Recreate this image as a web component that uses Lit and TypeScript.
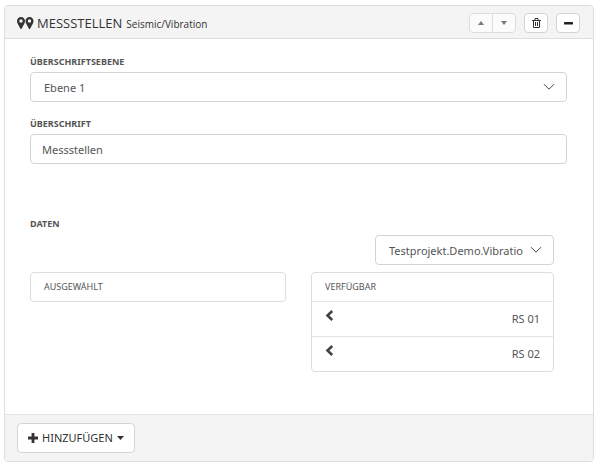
import { LitElement, html, css, svg } from "lit";
import { customElement, property } from "lit/decorators.js";

const pin = svg`<path fill-rule="evenodd" d="M4 0C1.700 0 0 1.800 0 4c0 1 .3 1.700.6 2.400L3.300 11.500Q4 12.500 4.700 11.500L7.400 6.400C7.700 5.700 8 5 8 4 8 1.800 6.300 0 4 0ZM4 2.300a1.700 1.700 0 1 1 0 3.400 1.700 1.700 0 0 1 0-3.400Z"/>`;

const chevron = html`<svg class="chevron" width="12" height="8" viewBox="0 0 12 8" aria-hidden="true">
  <path d="M1 1.200L6 6.200L11 1.200" fill="none" stroke="#444" stroke-width="1"/>
</svg>`;

@customElement("app-root")
export class AppRoot extends LitElement {
  @property({ attribute: false }) available = ["RS 01", "RS 02"];

  static styles = css`
    :host {
      display: block;
      padding: 5px 6px 6px 4px;
      font-family: "Noto Sans", "Open Sans", sans-serif;
      font-size: 11px;
      line-height: 20px;
      color: #555;
    }
    * {
      box-sizing: border-box;
    }
    button,
    input,
    select {
      font: inherit;
      color: inherit;
      margin: 0;
      background: #fff;
      border: 1px solid #d4d4d4;
      border-radius: 4px;
    }
    svg {
      display: block;
      flex: none;
    }
    .panel {
      border: 1px solid #ddd;
      border-radius: 4px;
      background: #fff;
      overflow: hidden;
    }
    .head {
      display: flex;
      align-items: center;
      height: 33px;
      padding: 2px 13px 0 12px;
      background: #f4f4f4;
      border-bottom: 1px solid #ddd;
      color: #333;
    }
    .title {
      display: flex;
      align-items: baseline;
      gap: 4px;
      flex: 1;
      margin: 0 0 0 3px;
      font-family: "Open Sans", "Noto Sans", sans-serif;
      font-size: 13px;
      font-weight: 400;
    }
    .title small {
      font-size: 10px;
    }
    .tools {
      display: flex;
      gap: 8px;
    }
    .pair {
      display: flex;
    }
    .tool {
      display: flex;
      align-items: center;
      justify-content: center;
      width: 24px;
      height: 20px;
      padding: 0;
      color: #333;
    }
    .pair .tool {
      color: #777;
      background: #fbfbfb;
      border-color: #ddd;
    }
    .pair .tool:first-child {
      border-radius: 4px 0 0 4px;
    }
    .pair .tool:last-child {
      margin-left: -1px;
      border-radius: 0 4px 4px 0;
    }
    .body {
      padding: 13px 26px 42px 25px;
    }
    .label {
      display: block;
      font-size: 9px;
      font-weight: 700;
    }
    .select {
      display: grid;
      align-items: center;
    }
    .select > * {
      grid-area: 1 / 1;
    }
    .select select {
      appearance: none;
      width: 100%;
      height: 30px;
      padding: 1px 12px 0 13px;
    }
    .chevron {
      justify-self: end;
      margin-right: 12px;
      pointer-events: none;
    }
    .text {
      display: block;
      width: 100%;
      height: 30px;
      padding: 1px 11px 0;
    }
    .field {
      margin-bottom: 12px;
    }
    .data {
      padding: 50px 13px 0 0;
    }
    .source {
      width: 179px;
      margin: 1px 0 7px auto;
    }
    .lists {
      display: grid;
      grid-template-columns: 256fr 243fr;
      gap: 25px;
      align-items: start;
    }
    .list {
      border: 1px solid #ddd;
      border-radius: 4px;
    }
    .list h3 {
      margin: 0;
      padding: 4px 13px;
      font-size: 9px;
      font-weight: 400;
    }
    .list ul {
      margin: 0;
      padding: 0;
      list-style: none;
    }
    .list li {
      display: flex;
      justify-content: space-between;
      align-items: flex-start;
      padding: 7px 13px;
      border-top: 1px solid #e4e4e4;
    }
    .pick {
      padding: 1px 0;
      border: 0;
      color: #444;
    }
    .foot {
      padding: 8px 12px;
      background: #f4f4f4;
      border-top: 1px solid #e4e4e4;
    }
    .add {
      display: flex;
      align-items: center;
      gap: 4px;
      height: 30px;
      padding: 0 10px;
      color: #333;
    }
  `;

  render() {
    return html`
      <section class="panel">
        <header class="head">
          <svg width="17" height="13" viewBox="0 0 17 13" fill="#333" aria-hidden="true">
            ${pin}<g transform="translate(8.500 0)">${pin}</g>
          </svg>
          <h2 class="title">MESSSTELLEN <small>Seismic/Vibration</small></h2>
          <div class="tools">
            <div class="pair">
              <button class="tool" aria-label="Nach oben">
                <svg width="6" height="4" viewBox="0 0 6 4" fill="currentColor"><path d="M0 4L3 0L6 4Z"/></svg>
              </button>
              <button class="tool" aria-label="Nach unten">
                <svg width="6" height="4" viewBox="0 0 6 4" fill="currentColor"><path d="M0 0L3 4L6 0Z"/></svg>
              </button>
            </div>
            <button class="tool" aria-label="Löschen">
              <svg width="9" height="10" viewBox="0 0 9 10" fill="none" stroke="currentColor">
                <path d="M0 2.500H9M3 2V.500H6V2M1.500 2.500V9.500H7.500V2.500M3.500 4V8M5.500 4V8"/>
              </svg>
            </button>
            <button class="tool" aria-label="Einklappen">
              <svg width="9" height="3" viewBox="0 0 9 3" fill="#222"><rect width="9" height="2.500" rx=".5"/></svg>
            </button>
          </div>
        </header>
        <div class="body">
          <div class="field">
            <label class="label" for="level">ÜBERSCHRIFTSEBENE</label>
            <div class="select">
              <select id="level"><option>Ebene 1</option></select>
              ${chevron}
            </div>
          </div>
          <label class="label" for="heading">ÜBERSCHRIFT</label>
          <input class="text" id="heading" type="text" .value=${"Messstellen"} />
          <div class="data">
            <label class="label" for="source">DATEN</label>
            <div class="select source">
              <select id="source"><option>Testprojekt.Demo.Vibratio</option></select>
              ${chevron}
            </div>
            <div class="lists">
              <section class="list"><h3>AUSGEWÄHLT</h3></section>
              <section class="list">
                <h3>VERFÜGBAR</h3>
                <ul>
                  ${this.available.map(
                    (name) => html`<li>
                      <button class="pick" aria-label="${name} auswählen">
                        <svg width="9" height="11" viewBox="0 0 9 11" fill="none" stroke="currentColor" stroke-width="2.600">
                          <path d="M7.200 1L2.500 5.500L7.200 10"/>
                        </svg>
                      </button>
                      <span>${name}</span>
                    </li>`
                  )}
                </ul>
              </section>
            </div>
          </div>
        </div>
        <footer class="foot">
          <button class="add">
            <svg width="10" height="10" viewBox="0 0 10 10" fill="currentColor"><path d="M3.600 0H6.400V3.600H10V6.400H6.400V10H3.600V6.400H0V3.600H3.600Z"/></svg>
            HINZUFÜGEN
            <svg width="7" height="4" viewBox="0 0 7 4" fill="currentColor"><path d="M0 0H7L3.500 4Z"/></svg>
          </button>
        </footer>
      </section>
    `;
  }
}
